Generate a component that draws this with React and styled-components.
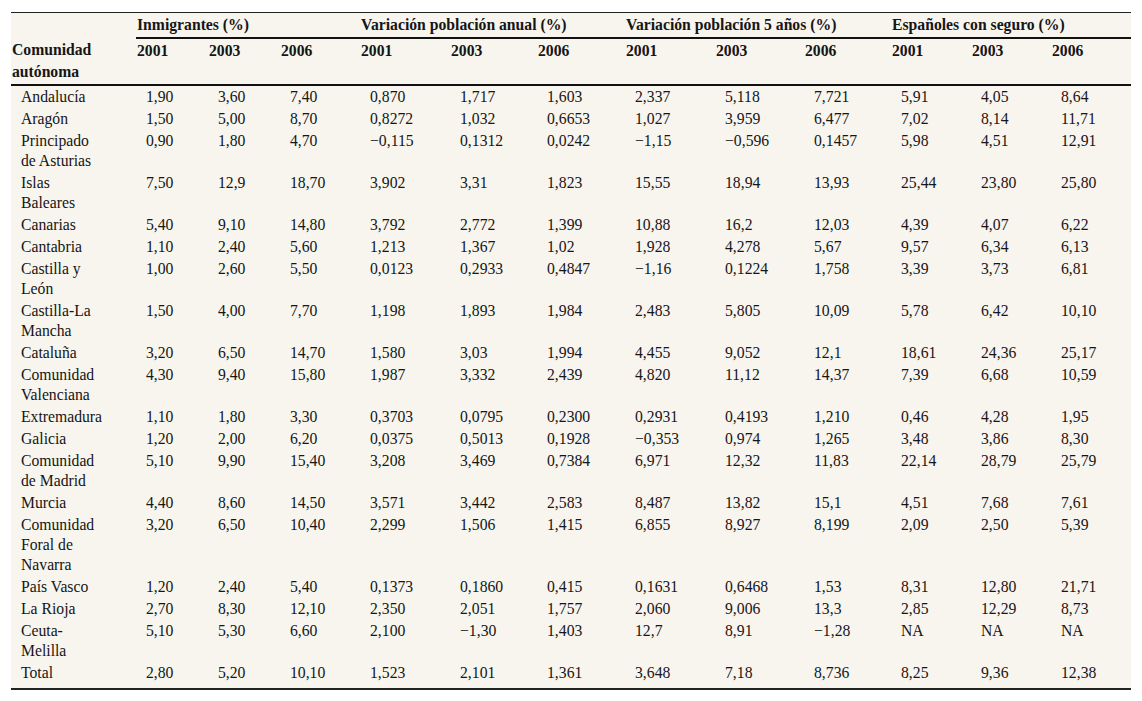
import React from "react";
import styled, { createGlobalStyle } from "styled-components";

const Global = createGlobalStyle`
  html, body { margin: 0; padding: 0; background: #ffffff; }
  body { font-family: "Liberation Serif", "Times New Roman", serif; color: #161616; }
`;

const Page = styled.div`
  padding: 12px 11px 0 11px;
`;

const Table = styled.table`
  width: 1120px;
  table-layout: fixed;
  border-collapse: collapse;
  background: #f8f5ef;
  font-size: 15.7px;
  border-top: 1px solid #222;
  border-bottom: 2px solid #222;
`;

const HeadCell = styled.th`
  font-weight: bold;
  text-align: left;
  vertical-align: top;
  line-height: 22px;
  padding: 1px 0 1px 1px;
  white-space: nowrap;
  border-bottom: ${(p) => (p.$rule ? "2px solid #111" : "none")};
`;

const Cell = styled.td`
  text-align: left;
  vertical-align: top;
  line-height: 20px;
  padding: 1px 0 ${(p) => (p.$last ? "5px" : "1px")} 10px;
  white-space: nowrap;
`;

const widths = [125, 72, 72, 80, 90, 87, 88, 90, 89, 87, 80, 80, 80];

const groups = [
  "Inmigrantes (%)",
  "Variación población anual (%)",
  "Variación población 5 años (%)",
  "Españoles con seguro (%)",
];

const M = "\u2212";

const rows = [
  [["Andalucía"], "1,90", "3,60", "7,40", "0,870", "1,717", "1,603", "2,337", "5,118", "7,721", "5,91", "4,05", "8,64"],
  [["Aragón"], "1,50", "5,00", "8,70", "0,8272", "1,032", "0,6653", "1,027", "3,959", "6,477", "7,02", "8,14", "11,71"],
  [["Principado", "de Asturias"], "0,90", "1,80", "4,70", M + "0,115", "0,1312", "0,0242", M + "1,15", M + "0,596", "0,1457", "5,98", "4,51", "12,91"],
  [["Islas", "Baleares"], "7,50", "12,9", "18,70", "3,902", "3,31", "1,823", "15,55", "18,94", "13,93", "25,44", "23,80", "25,80"],
  [["Canarias"], "5,40", "9,10", "14,80", "3,792", "2,772", "1,399", "10,88", "16,2", "12,03", "4,39", "4,07", "6,22"],
  [["Cantabria"], "1,10", "2,40", "5,60", "1,213", "1,367", "1,02", "1,928", "4,278", "5,67", "9,57", "6,34", "6,13"],
  [["Castilla y", "León"], "1,00", "2,60", "5,50", "0,0123", "0,2933", "0,4847", M + "1,16", "0,1224", "1,758", "3,39", "3,73", "6,81"],
  [["Castilla-La", "Mancha"], "1,50", "4,00", "7,70", "1,198", "1,893", "1,984", "2,483", "5,805", "10,09", "5,78", "6,42", "10,10"],
  [["Cataluña"], "3,20", "6,50", "14,70", "1,580", "3,03", "1,994", "4,455", "9,052", "12,1", "18,61", "24,36", "25,17"],
  [["Comunidad", "Valenciana"], "4,30", "9,40", "15,80", "1,987", "3,332", "2,439", "4,820", "11,12", "14,37", "7,39", "6,68", "10,59"],
  [["Extremadura"], "1,10", "1,80", "3,30", "0,3703", "0,0795", "0,2300", "0,2931", "0,4193", "1,210", "0,46", "4,28", "1,95"],
  [["Galicia"], "1,20", "2,00", "6,20", "0,0375", "0,5013", "0,1928", M + "0,353", "0,974", "1,265", "3,48", "3,86", "8,30"],
  [["Comunidad", "de Madrid"], "5,10", "9,90", "15,40", "3,208", "3,469", "0,7384", "6,971", "12,32", "11,83", "22,14", "28,79", "25,79"],
  [["Murcia"], "4,40", "8,60", "14,50", "3,571", "3,442", "2,583", "8,487", "13,82", "15,1", "4,51", "7,68", "7,61"],
  [["Comunidad", "Foral de", "Navarra"], "3,20", "6,50", "10,40", "2,299", "1,506", "1,415", "6,855", "8,927", "8,199", "2,09", "2,50", "5,39"],
  [["País Vasco"], "1,20", "2,40", "5,40", "0,1373", "0,1860", "0,415", "0,1631", "0,6468", "1,53", "8,31", "12,80", "21,71"],
  [["La Rioja"], "2,70", "8,30", "12,10", "2,350", "2,051", "1,757", "2,060", "9,006", "13,3", "2,85", "12,29", "8,73"],
  [["Ceuta-", "Melilla"], "5,10", "5,30", "6,60", "2,100", M + "1,30", "1,403", "12,7", "8,91", M + "1,28", "NA", "NA", "NA"],
  [["Total"], "2,80", "5,20", "10,10", "1,523", "2,101", "1,361", "3,648", "7,18", "8,736", "8,25", "9,36", "12,38"],
];

const years = ["2001", "2003", "2006"];

export default function App() {
  return (
    <Page>
      <Global />
      <Table>
        <colgroup>
          {widths.map((w, i) => (
            <col key={i} style={{ width: w }} />
          ))}
        </colgroup>
        <thead>
          <tr>
            <HeadCell />
            {groups.map((g) => (
              <HeadCell key={g} colSpan={3} $rule>
                {g}
              </HeadCell>
            ))}
          </tr>
          <tr>
            <HeadCell $rule>
              Comunidad
              <br />
              autónoma
            </HeadCell>
            {groups.map((g) =>
              years.map((y) => (
                <HeadCell key={g + y} $rule>
                  {y}
                </HeadCell>
              ))
            )}
          </tr>
        </thead>
        <tbody>
          {rows.map((r, ri) => {
            const last = ri === rows.length - 1;
            return (
              <tr key={ri}>
                <Cell $last={last}>
                  {r[0].map((line, li) => (
                    <React.Fragment key={li}>
                      {li > 0 && <br />}
                      {line}
                    </React.Fragment>
                  ))}
                </Cell>
                {r.slice(1).map((v, ci) => (
                  <Cell key={ci} $last={last}>
                    {v}
                  </Cell>
                ))}
              </tr>
            );
          })}
        </tbody>
      </Table>
    </Page>
  );
}
